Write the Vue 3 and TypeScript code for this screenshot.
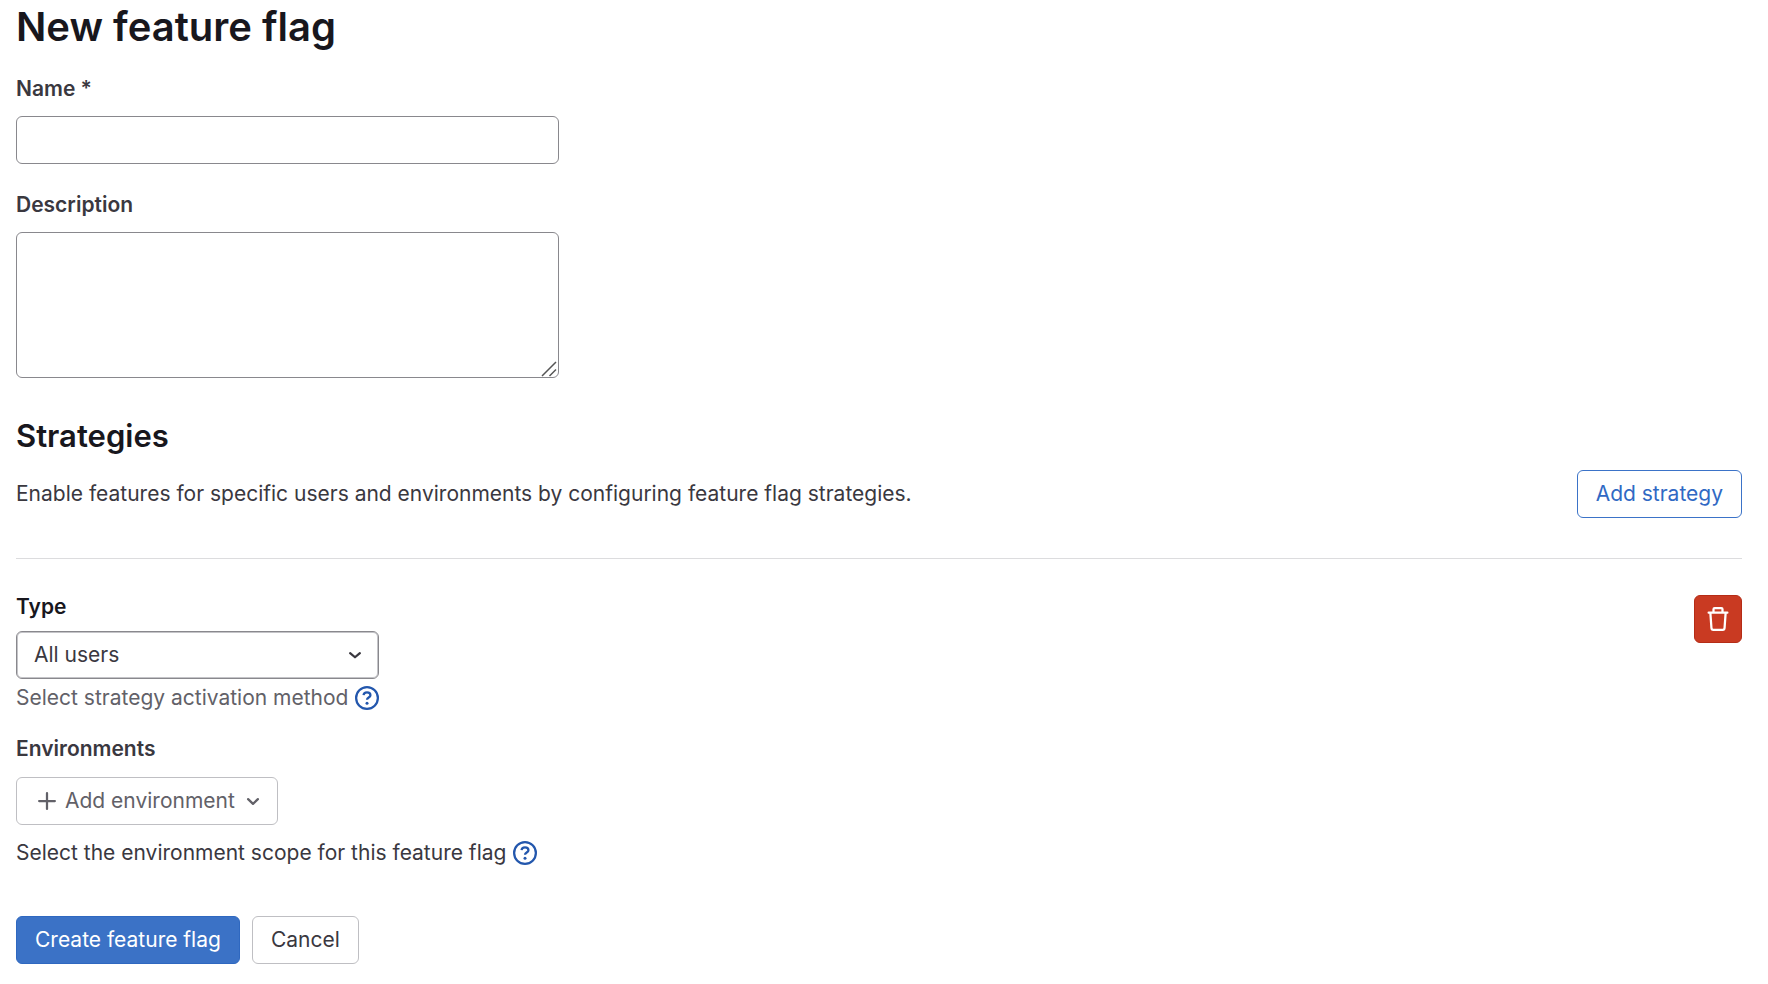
<script setup lang="ts">
import { ref } from 'vue'

const name = ref('')
const description = ref('')
const strategyType = ref('all')

const strategyTypes = [
  { value: 'all', label: 'All users' },
  { value: 'rollout', label: 'Percent rollout' },
  { value: 'userId', label: 'User IDs' },
  { value: 'userList', label: 'User List' },
]
</script>

<template>
  <main class="page">
    <h1 class="title">New feature flag</h1>
    <form @submit.prevent>
      <div class="field">
        <label class="label" for="flag-name">Name *</label>
        <input id="flag-name" v-model="name" class="control" type="text" required />
      </div>
      <div class="field">
        <label class="label" for="flag-description">Description</label>
        <div class="textarea-wrap">
          <textarea id="flag-description" v-model="description" class="control area"></textarea>
          <svg class="grip" viewBox="0 0 16 16" aria-hidden="true">
            <path d="M1 15 15 1M8.5 15 15 8.5" fill="none" stroke="#555" stroke-width="1.5" />
          </svg>
        </div>
      </div>

      <h2 class="subtitle">Strategies</h2>
      <div class="intro">
        <p class="text">Enable features for specific users and environments by configuring feature flag strategies.</p>
        <button type="button" class="btn confirm">Add strategy</button>
      </div>

      <section class="strategy">
        <div class="strategy-body">
          <label class="type-label" for="strategy-type">Type</label>
          <div class="select-wrap">
            <select id="strategy-type" v-model="strategyType" class="control select">
              <option v-for="t in strategyTypes" :key="t.value" :value="t.value">{{ t.label }}</option>
            </select>
            <svg class="select-arrow" viewBox="0 0 16 16" aria-hidden="true">
              <path d="M4.75 6.75 8 9.5l3.25-2.75" fill="none" stroke="currentColor" stroke-width="1.5" stroke-linecap="round" stroke-linejoin="round" />
            </svg>
          </div>
          <p class="help muted">
            Select strategy activation method
            <a href="#strategy-help" class="help-link" aria-label="Strategy help">
              <svg class="icon" viewBox="0 0 16 16" aria-hidden="true">
                <circle cx="8" cy="8" r="7.25" fill="none" stroke="currentColor" stroke-width="1.5" />
                <path d="M5.7 6.1C5.8 4.9 6.8 4.25 8 4.25c1.3 0 2.3.7 2.3 1.85C10.3 7.6 8 7.7 8 9.15" fill="none" stroke="currentColor" stroke-width="1.5" />
                <circle cx="8" cy="11.5" r="1" fill="currentColor" />
              </svg>
            </a>
          </p>
          <span id="env-label" class="env-label">Environments</span>
          <button type="button" class="btn env" aria-describedby="env-label">
            <svg class="icon" viewBox="0 0 16 16" aria-hidden="true">
              <path d="M8 2.75v10.5M2.75 8h10.5" fill="none" stroke="currentColor" stroke-width="1.5" stroke-linecap="round" />
            </svg>
            <span>Add environment</span>
            <svg class="icon" viewBox="0 0 16 16" aria-hidden="true">
              <path d="M4.75 6.75 8 9.95l3.25-3.2" fill="none" stroke="currentColor" stroke-width="1.5" stroke-linecap="round" stroke-linejoin="round" />
            </svg>
          </button>
          <p class="help">
            Select the environment scope for this feature flag
            <a href="#environment-help" class="help-link" aria-label="Environment help">
              <svg class="icon" viewBox="0 0 16 16" aria-hidden="true">
                <circle cx="8" cy="8" r="7.25" fill="none" stroke="currentColor" stroke-width="1.5" />
                <path d="M5.7 6.1C5.8 4.9 6.8 4.25 8 4.25c1.3 0 2.3.7 2.3 1.85C10.3 7.6 8 7.7 8 9.15" fill="none" stroke="currentColor" stroke-width="1.5" />
                <circle cx="8" cy="11.5" r="1" fill="currentColor" />
              </svg>
            </a>
          </p>
        </div>
        <button type="button" class="btn danger" aria-label="Delete strategy">
          <svg class="icon" viewBox="0 0 16 16" aria-hidden="true">
            <path d="M5 3.5V1.5a.75.75 0 0 1 .75-.75h4.5a.75.75 0 0 1 .75.75v2M1.75 3.75h12.5M2.9 3.75l.73 10.3a1.25 1.25 0 0 0 1.25 1.2h6.24a1.25 1.25 0 0 0 1.25-1.2l.73-10.3" fill="none" stroke="currentColor" stroke-width="1.5" stroke-linecap="round" stroke-linejoin="round" />
          </svg>
        </button>
      </section>

      <div class="actions">
        <button type="submit" class="btn primary">Create feature flag</button>
        <button type="button" class="btn">Cancel</button>
      </div>
    </form>
  </main>
</template>

<style>
body {
  margin: 0;
  background: #fff;
}
</style>

<style scoped>
.page {
  padding: 0 26px 20px 16px;
  font-family: Inter, "Noto Sans", sans-serif;
  font-size: 21px;
  line-height: 32px;
  color: #3a383f;
}
.title {
  margin: 0 0 19px;
  font-size: 40px;
  line-height: 54px;
  font-weight: 600;
  color: #18171d;
}
.field {
  display: flex;
  flex-direction: column;
  max-width: 543px;
  margin-bottom: 25px;
}
.label {
  margin-bottom: 11px;
  font-weight: 600;
}
.control {
  box-sizing: border-box;
  width: 100%;
  height: 48px;
  padding: 0 17px;
  border: 1px solid #89888d;
  border-radius: 6px;
  background: #fff;
  color: inherit;
  font: inherit;
}
.textarea-wrap {
  position: relative;
  display: flex;
}
.area {
  height: 146px;
  padding: 12px 17px;
  resize: none;
}
.grip {
  position: absolute;
  right: 2px;
  bottom: 1px;
  width: 16px;
  height: 16px;
}
.subtitle {
  margin: 38px 0 14px;
  font-size: 31px;
  line-height: 40px;
  font-weight: 600;
  color: #18171d;
}
.intro {
  display: flex;
  align-items: center;
  justify-content: space-between;
  gap: 24px;
  padding-bottom: 40px;
  border-bottom: 1px solid #dcdcde;
}
.text {
  margin: 0;
}
.btn {
  box-sizing: border-box;
  display: inline-flex;
  align-items: center;
  justify-content: center;
  height: 48px;
  padding: 0 18px;
  border: 1px solid #bfbfc3;
  border-radius: 6px;
  background: #fff;
  color: #3a383f;
  font: inherit;
  white-space: nowrap;
}
.confirm {
  border-color: #3b73c8;
  color: #3069c4;
}
.primary {
  border-color: #2f68c0;
  background: #3b72c6;
  color: #fff;
}
.danger {
  width: 48px;
  padding: 0;
  border-color: #b52c16;
  background: #c93a22;
  color: #fff;
}
.icon {
  display: block;
  flex: none;
  width: 24px;
  height: 24px;
}
.strategy {
  display: flex;
  align-items: flex-start;
  justify-content: space-between;
  padding-top: 36px;
}
.strategy-body {
  display: flex;
  flex-direction: column;
  align-items: flex-start;
  margin-top: -4px;
}
.type-label {
  margin-bottom: 8px;
  font-weight: 600;
  color: #18171d;
}
.select-wrap {
  position: relative;
  width: 363px;
  max-width: 100%;
}
.select {
  display: block;
  appearance: none;
  box-shadow: inset 0 0 0 1px #c4c4c8;
}
.select-arrow {
  position: absolute;
  top: 12px;
  right: 12px;
  width: 24px;
  height: 24px;
  pointer-events: none;
}
.help {
  display: flex;
  align-items: center;
  gap: 7px;
  margin: 3px 0 0;
}
.muted {
  color: #626168;
}
.help-link {
  color: #2357ad;
}
.env-label {
  margin: 19px 0 12px;
  font-weight: 600;
}
.env {
  gap: 6px;
  padding: 0 12px 0 18px;
  color: #626168;
  margin-bottom: 9px;
}
.actions {
  display: flex;
  gap: 12px;
  margin-top: 47px;
}
</style>
